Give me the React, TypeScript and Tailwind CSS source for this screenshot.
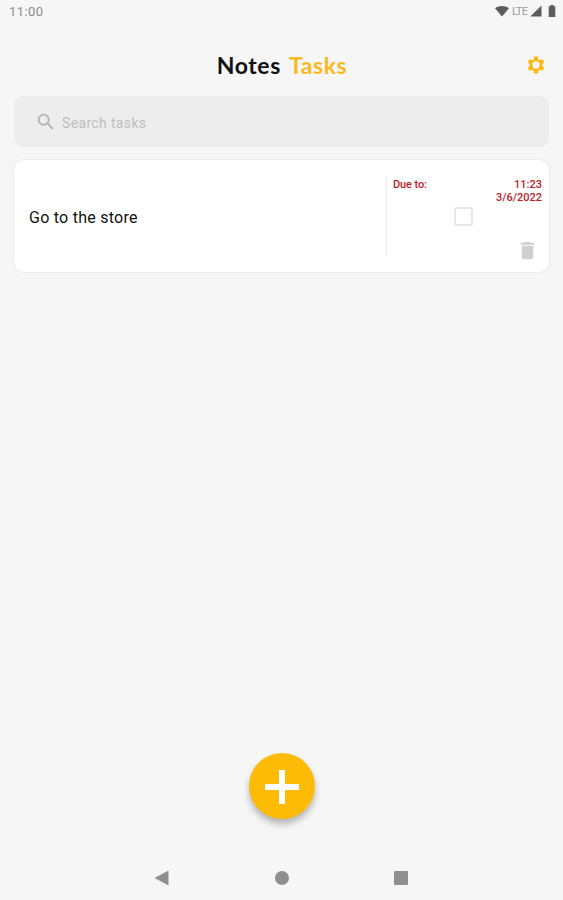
import { useState } from 'react';
import { MdSearch, MdDelete } from 'react-icons/md';

interface Task {
  id: number;
  title: string;
  dueTime: string;
  dueDate: string;
  done: boolean;
}

const initialTasks: Task[] = [
  { id: 1, title: 'Go to the store', dueTime: '11:23', dueDate: '3/6/2022', done: false }
];

const GEAR_TEETH = [0, 60, 120, 180, 240, 300];

function GearIcon() {
  return (
    <svg viewBox="0 0 20 20" className="w-5 h-5">
      <circle cx="10" cy="10" r="5" fill="none" stroke="#fbb914" strokeWidth="2.7" />
      {GEAR_TEETH.map((angle) => (
        <path key={angle} d="M7.7 4.8 8.2 1.5h3.6l.5 3.3z" fill="#fbb914" transform={`rotate(${angle} 10 10)`} />
      ))}
    </svg>
  );
}

function StatusBar() {
  return (
    <div className="h-6 pl-[9px] pr-[7px] flex items-center justify-between text-[#8c8c8c]">
      <span className="-mt-px text-[13px] leading-none tracking-[0.4px]">11:00</span>
      <div className="flex items-center h-3 -mt-0.5">
        <svg viewBox="0 0 14 12" className="w-3.5 h-3">
          <path d="M0 3.3C4 .1 10 .1 14 3.3L7 11.5z" fill="#5c5c5c" />
        </svg>
        <span className="ml-[3px] w-[17px] text-[11px] leading-none tracking-[-0.6px] text-[#9a9a9a]">LTE</span>
        <svg viewBox="0 0 12 12" className="w-3 h-3 ml-px">
          <path d="M11.5.5v11H.3z" fill="#5c5c5c" />
        </svg>
        <svg viewBox="0 0 8 12" className="w-2 h-3 ml-1.5">
          <path d="M2.5 0h3v1.2h1.8V12H.7V1.2h1.8z" fill="#5c5c5c" />
        </svg>
      </div>
    </div>
  );
}

function TaskCard({ task, onToggle, onDelete }: { task: Task; onToggle: () => void; onDelete: () => void }) {
  return (
    <div className="h-28 flex bg-white rounded-[9px] py-4 pl-[15px] pr-[7px] shadow-[0_0_2px_rgba(0,0,0,0.14)]">
      <div className="flex-1 flex items-center pt-1 text-[16px] tracking-[0.25px] text-[#111]">{task.title}</div>
      <div className="w-[156px] flex flex-col border-l border-[#e9e9e9] pl-[6px]">
        <div className="flex justify-between pt-0.5 text-[11px] leading-[13px] font-medium text-[#bd1b27]">
          <span className="tracking-[-0.1px]">Due to:</span>
          <div className="text-right">
            <div>{task.dueTime}</div>
            <div>{task.dueDate}</div>
          </div>
        </div>
        <button
          onClick={onToggle}
          className={`shrink-0 ml-[61px] mt-[3px] w-[19px] h-[19px] rounded-xs border-2 border-[#e8e8e8] ${task.done ? 'bg-[#fdb90b]' : 'bg-white'}`}
        />
        <button onClick={onDelete} className="shrink-0 self-end mt-[13px] mr-[3px] text-[#d0d0d0]">
          <MdDelete className="w-[23px] h-[23px]" />
        </button>
      </div>
    </div>
  );
}

export default function App() {
  const [tasks, setTasks] = useState(initialTasks);
  const [query, setQuery] = useState('');

  const toggleTask = (id: number) => {
    setTasks((prev) => prev.map((t) => (t.id === id ? { ...t, done: !t.done } : t)));
  };

  const deleteTask = (id: number) => {
    setTasks((prev) => prev.filter((t) => t.id !== id));
  };

  const visible = tasks.filter((t) => t.title.toLowerCase().includes(query.toLowerCase()));

  return (
    <div className="h-screen flex flex-col bg-[#f6f6f6] font-[Roboto,sans-serif] overflow-hidden">
      <StatusBar />

      {/* Header */}
      <div className="h-[72px] grid grid-cols-[1fr_auto_1fr] items-center pt-[11px] pb-0.5 pr-[17px]">
        <div />
        <h1 className="ml-[18px] flex gap-2 font-[Lato,sans-serif] font-bold text-[23px] leading-6 tracking-[0.6px]">
          <span className="text-[#111]">Notes</span>
          <span className="text-[#fbb921]">Tasks</span>
        </h1>
        <button className="justify-self-end">
          <GearIcon />
        </button>
      </div>

      <div className="flex-1 px-3.5">
        {/* Search */}
        <div className="h-[51px] mb-[13px] pl-[21px] flex items-center gap-[5px] bg-[#ededed] rounded-[9px]">
          <MdSearch className="w-[22px] h-[22px] text-[#b5b5b5]" />
          <input
            value={query}
            onChange={(e) => setQuery(e.target.value)}
            placeholder="Search tasks"
            className="flex-1 pt-[3px] bg-transparent text-[14px] tracking-[0.35px] placeholder-[#bdbdbd] outline-none"
          />
        </div>

        {visible.map((task) => (
          <TaskCard
            key={task.id}
            task={task}
            onToggle={() => toggleTask(task.id)}
            onDelete={() => deleteTask(task.id)}
          />
        ))}
      </div>

      <div className="flex justify-center mb-[37px]">
        <button className="w-[66px] h-[66px] rounded-full bg-[#fdbb06] flex items-center justify-center pt-0.5 shadow-[0_5px_7px_rgba(0,0,0,0.27)]">
          <svg viewBox="0 0 34 34" className="w-[34px] h-[34px]">
            <path d="M17 0v34M0 17h34" stroke="#fff" strokeWidth="6" />
          </svg>
        </button>
      </div>

      {/* System navigation */}
      <div className="h-11 pl-[154px] pr-[155px] flex items-center justify-between">
        <svg viewBox="0 0 15 16" className="w-[15px] h-4">
          <path d="M14.5.5v15L.5 8z" fill="#8f8f8f" />
        </svg>
        <div className="w-3.5 h-3.5 rounded-full bg-[#8f8f8f]" />
        <div className="w-3.5 h-3.5 rounded-[1px] bg-[#8f8f8f]" />
      </div>
    </div>
  );
}
